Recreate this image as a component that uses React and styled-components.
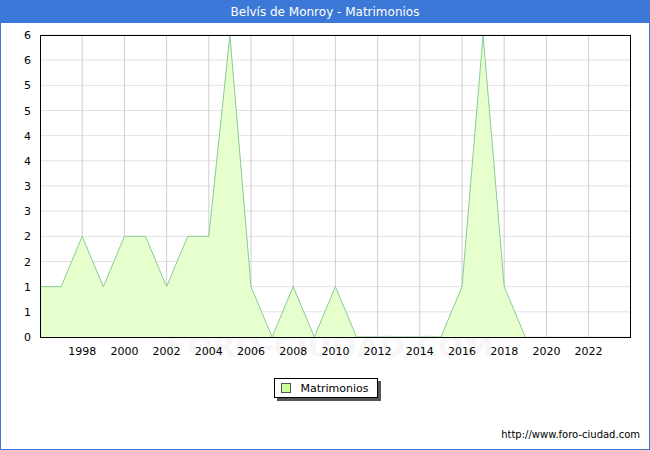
import React from "react";
import styled, { createGlobalStyle } from "styled-components";

const G = createGlobalStyle`body{margin:0;font-family:"DejaVu Sans",Verdana,sans-serif;background:#fff;}`;
const Frame = styled.div`width:648px;height:448px;border:1px solid #3c78d8;display:flex;flex-direction:column;background:#fff;`;
const Title = styled.div`height:22px;background:#3c78d8;color:#fff;font-size:12px;display:flex;align-items:center;justify-content:center;`;
const Chart = styled.svg`display:block;`;
const LegendRow = styled.div`display:flex;justify-content:center;margin-top:20px;padding-left:2px;`;
const Legend = styled.div`display:flex;align-items:center;gap:9px;border:1px solid #000;box-shadow:3px 3px 0 #555;padding:2px 8px 2px 6px;font-size:11px;height:14px;`;
const Swatch = styled.span`width:8px;height:8px;background:#ccff99;border:1px solid #555;`;
const Footer = styled.div`margin-top:auto;padding:0 9px 9px 0;text-align:right;font-size:10px;`;

const data = [1,1,2,1,2,2,1,2,2,6,1,0,1,0,1,0,0,0,0,0,1,6,1,0];
const X = (i) => 40 + 21.1 * i;
const Y = (v) => 337 - v * (302 / 6);

export default function App() {
  const pts = data.map((v, i) => `${X(i)},${Y(v)}`).join(" ");
  const labels = [0,1,1,2,2,3,3,4,4,5,5,6,6];
  const years = [];
  for (let y = 1998; y <= 2022; y += 2) years.push(y);
  return (
    <Frame>
      <G />
      <Title>Belvís de Monroy - Matrimonios</Title>
      <Chart width="648" height="335" viewBox="1 23 648 335">
        <text x="330" y="357" fontSize="30" fill="#f6f6f6" textAnchor="middle" fontWeight="bold" fontFamily="DejaVu Sans">FORO-CIUDAD.COM</text>
        {labels.map((l, i) => {
          const y = 337 - i * (302 / 12);
          return (
            <g key={i}>
              <line x1="40" x2="630" y1={y} y2={y} stroke="#e2e2e2" />
              <text x="31" y={y + 4} fontSize="11" textAnchor="end" fill="#000">{l}</text>
            </g>
          );
        })}
        {years.map((yr) => {
          const x = X(yr - 1996);
          return (
            <g key={yr}>
              <line x1={x} x2={x} y1="35" y2="337" stroke="#cfcfcf" />
              <text x={x} y="355" fontSize="11" textAnchor="middle">{yr}</text>
            </g>
          );
        })}
        <polygon points={`40,337 ${pts} ${X(23)},337`} fill="#e6ffcc" />
        <polyline points={pts} fill="none" stroke="#88cc99" strokeWidth="1" />
        <rect x="40.5" y="35.5" width="590" height="302" fill="none" stroke="#000" />
      </Chart>
      <LegendRow>
        <Legend><Swatch />Matrimonios</Legend>
      </LegendRow>
      <Footer>http://www.foro-ciudad.com</Footer>
    </Frame>
  );
}
